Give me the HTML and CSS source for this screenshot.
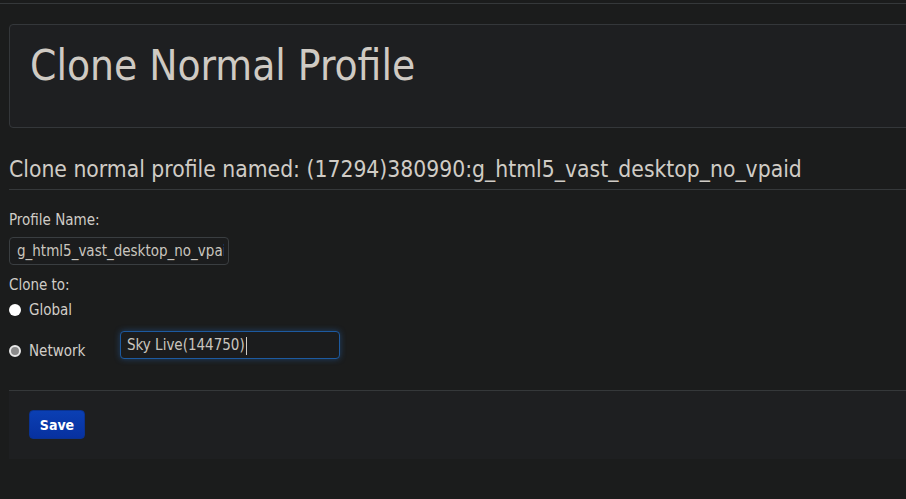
FILE: index.html
```html
<!DOCTYPE html>
<html>
<head>
<meta charset="utf-8">
<title>Clone Normal Profile</title>
<link rel="stylesheet" href="styles.css">
</head>
<body>
<div class="topline"></div>
<div class="page">
  <div class="hero">
    <h1 class="hero-title">Clone Normal Profile</h1>
  </div>
  <h3 class="section-title">Clone normal profile named: (17294)380990:g_html5_vast_desktop_no_vpaid</h3>
  <form class="clone-form">
    <label class="field-label">Profile Name:</label>
    <div class="text-input"><span class="input-value">g_html5_vast_desktop_no_vpaid</span></div>
    <label class="field-label clone-to">Clone to:</label>
    <div class="radio-row global-row">
      <span class="radio"></span>
      <span class="radio-label">Global</span>
    </div>
    <div class="radio-row network-row">
      <span class="radio checked"></span>
      <span class="radio-label network-label">Network</span>
      <div class="text-input focused"><span class="input-value">Sky Live(144750)<span class="caret"></span></span></div>
    </div>
    <div class="form-actions">
      <button type="button" class="btn-save">Save</button>
    </div>
  </form>
</div>
</body>
</html>
```
FILE: styles.css
```css
html, body {
  margin: 0;
  padding: 0;
  height: 100%;
  overflow: hidden;
  background: #1b1c1c;
}
body {
  font-family: "DejaVu Sans Condensed", "DejaVu Sans", sans-serif;
  font-stretch: condensed;
  color: #d2cec8;
}
.topline {
  height: 3px;
  border-bottom: 1px solid #35383a;
}
.page {
  padding: 20px 0 0 9px;
  width: 1000px;
}
.hero {
  height: 102px;
  border: 1px solid #34373a;
  border-radius: 4px;
  background: #1e1f21;
  padding-left: 20px;
}
.hero-title {
  margin: 0;
  padding-top: 17px;
  font-size: 42px;
  line-height: 48px;
  font-weight: normal;
  color: #cfcac3;
}
.section-title {
  margin: 25px 0 0 0;
  font-size: 22.7px;
  line-height: 32px;
  font-weight: normal;
  padding-bottom: 4px;
  border-bottom: 1px solid #35383a;
  color: #d0ccc6;
}
.clone-form {
  padding-top: 20px;
}
.field-label {
  display: block;
  font-size: 15px;
  line-height: 20px;
  color: #d0ccc6;
}
.text-input {
  box-sizing: border-box;
  width: 220px;
  height: 28px;
  margin-top: 7px;
  padding: 0 4px 0 7px;
  border: 1px solid #3a3e41;
  border-radius: 4px;
  background: #1b1c1d;
  font-size: 15px;
  line-height: 26px;
  color: #c9c5bf;
}
.input-value {
  display: block;
  white-space: nowrap;
  overflow: hidden;
}
.clone-to {
  margin-top: 10px;
}
.radio-row {
  display: flex;
  align-items: center;
}
.global-row {
  height: 24px;
  margin-top: 3px;
}
.radio {
  box-sizing: border-box;
  width: 12px;
  height: 12px;
  border-radius: 50%;
  background: #ffffff;
  margin-right: 8px;
}
.radio.checked {
  background: #8a8a8a;
  border: 2px solid #e8e8e8;
}
.radio-label {
  font-size: 15px;
}
.network-row {
  margin-top: 9px;
}
.network-label {
  width: 91px;
}
.text-input.focused {
  margin: 0 0 11px 0;
  align-self: flex-start;
  border-color: #1d5aa0;
  box-shadow: 0 0 6px rgba(40, 110, 200, 0.45);
  padding-left: 6px;
}
.caret {
  display: inline-block;
  width: 1px;
  height: 18px;
  background: #d0ccc6;
  vertical-align: middle;
  margin-left: 1px;
}
.form-actions {
  margin-top: 20px;
  border-top: 1px solid #35383a;
  background: #1e1f21;
  padding: 19px 0 0 20px;
  box-sizing: border-box;
  height: 69px;
}
.btn-save {
  width: 56px;
  height: 29px;
  border: 1px solid #0a3290;
  border-radius: 4px;
  background: linear-gradient(#0b3fb3, #0731a0);
  color: #ffffff;
  font-family: "DejaVu Sans Condensed", "DejaVu Sans", sans-serif;
  font-stretch: condensed;
  font-size: 14px;
  font-weight: bold;
  padding: 0;
}
```
